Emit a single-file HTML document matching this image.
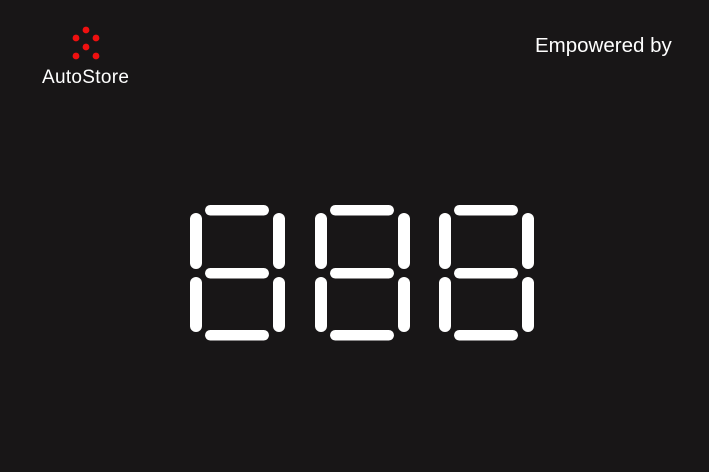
<!DOCTYPE html>
<html><head><meta charset="utf-8"><style>
html,body{margin:0;padding:0;}
body{width:709px;height:472px;background:#181617;position:relative;overflow:hidden;font-family:"Liberation Sans",sans-serif;}
.t{position:absolute;color:#fff;white-space:nowrap;}
</style></head><body>
<svg width="709" height="472" style="position:absolute;left:0;top:0">
<g fill="#f01010">
<circle cx="86" cy="30" r="3.4"/><circle cx="76" cy="38" r="3.4"/><circle cx="96" cy="38" r="3.4"/>
<circle cx="86" cy="47" r="3.4"/><circle cx="76" cy="56" r="3.4"/><circle cx="96" cy="56" r="3.4"/>
</g>
<defs>
<g id="d" fill="#fff">
<rect x="15" y="10" width="64" height="10.5" rx="5.2"/>
<rect x="15" y="73" width="64" height="10.5" rx="5.2"/>
<rect x="15" y="135" width="64" height="10.5" rx="5.2"/>
<rect x="0" y="18" width="12" height="56" rx="6"/>
<rect x="0" y="82" width="12" height="55" rx="6"/>
<rect x="83" y="18" width="12" height="56" rx="6"/>
<rect x="83" y="82" width="12" height="55" rx="6"/>
</g>
</defs>
<use href="#d" x="190" y="195"/>
<use href="#d" x="315" y="195"/>
<use href="#d" x="439" y="195"/>
</svg>
<div class="t" style="left:42px;top:67px;font-size:19px;letter-spacing:0.3px">AutoStore</div>
<div class="t" style="left:535px;top:34px;font-size:20.5px">Empowered by</div>
</body></html>
